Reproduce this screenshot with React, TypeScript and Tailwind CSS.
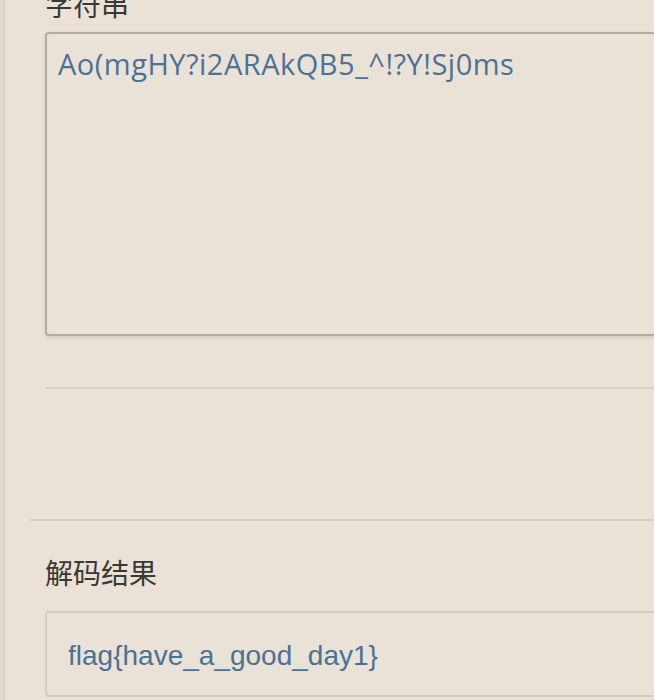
export default function App() {
  return (
    <div className="flex h-[700px] w-[654px] overflow-hidden bg-[#eae2d7]">
      {/* left rail */}
      <div className="w-[5px] shrink-0 border-r border-[#d3cabd] bg-[#e1d8cc]" />

      <div className="flex-1 pl-[25px]">
        {/* input section */}
        <section className="pl-[15px]">
          <h3 className="-mt-[16px] h-[40px] text-[28px] leading-[40px] text-[#3a3835] [font-family:'Noto_Sans_CJK_SC','Noto_Sans',sans-serif]">
            字符串
          </h3>
          <div className="mt-[8px] h-[304px] w-[700px] rounded-[4px] border-2 border-[#b5ab9e] bg-[#eae2d7] px-[11px] pt-[10px] shadow-[0_2px_4px_rgba(60,40,20,0.1)]">
            <p className="text-[29px] leading-[40px] tracking-[0.5px] text-[#4b7197] [font-family:'Open_Sans','Noto_Sans',sans-serif]">
              Ao(mgHY?i2ARAkQB5_^!?Y!Sj0ms
            </p>
          </div>
          <div className="mt-[51px] h-[2px] w-[700px] bg-[#d8cfc3]" />
          <div className="h-[130px]" />
        </section>

        {/* result section */}
        <section className="border-t-2 border-[#d8cfc3] pl-[15px] pt-[31px]">
          <h3 className="h-[40px] text-[28px] leading-[40px] text-[#3a3835] [font-family:'Noto_Sans_CJK_SC','Noto_Sans',sans-serif]">
            解码结果
          </h3>
          <div className="mt-[19px] h-[86px] w-[700px] rounded-[4px] border-2 border-[#d5ccc0] pl-[21px] pt-[27px]">
            <p className="text-[28px] leading-[32px] text-[#4b7197] [font-family:'Liberation_Sans',Arial,sans-serif]">
              flag{'{'}have_a_good_day1{'}'}
            </p>
          </div>
        </section>
      </div>
    </div>
  );
}
